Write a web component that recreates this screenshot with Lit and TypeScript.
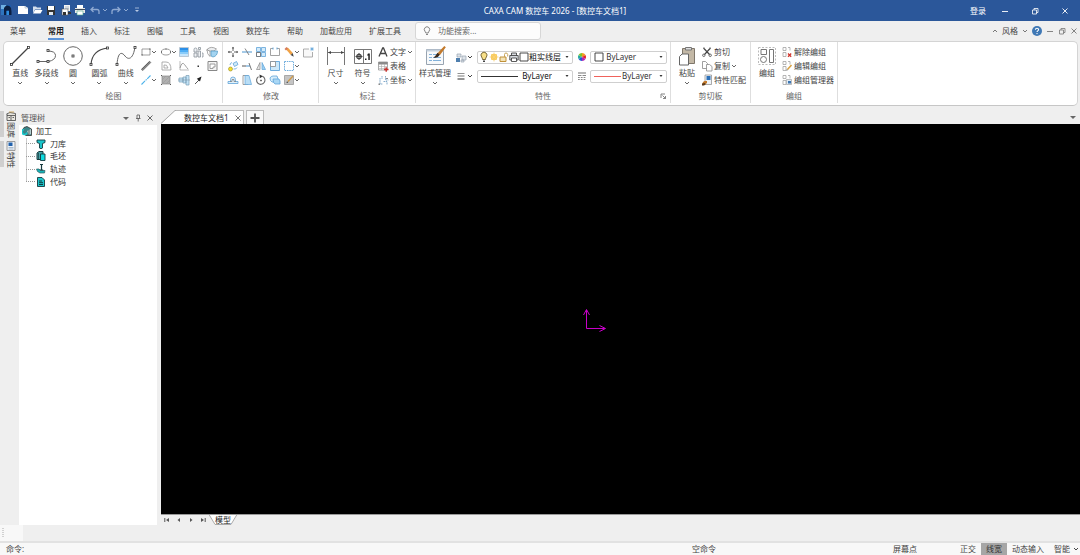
import { LitElement, html, css, svg, nothing, TemplateResult, SVGTemplateResult } from "lit";
import { customElement, property, state } from "lit/decorators.js";
import { classMap } from "lit/directives/class-map.js";

const G = "#777";
const B = "#5fa3d8";

type Glyph = { w: number; h: number; art: SVGTemplateResult };
const g = (w: number, h: number, art: SVGTemplateResult): Glyph => ({ w, h, art });
const node = (x: number, y: number) =>
  svg`<rect x=${x - 1} y=${y - 1} width="2" height="2" fill="#fff" stroke="#333" stroke-width=".8"/>`;

const ICONS: Record<string, Glyph> = {
  // window chrome
  logo: g(12, 12, svg`<path d="M1 1h10v10H1z" fill="#1d5aa8"/><path d="M1 1h5v4H1z" fill="#6fb0e4"/><path d="M1 5h4v6H1z" fill="#2f74bd"/><path d="M4 4q1-2.500 3.500-2.500T11 4l.5 3.500V11H9V6.500H6.500V11H4z" fill="#0b1f42"/><path d="M6.500 7H9v4H6.500z" fill="#2f8fe0"/>`),
  newFile: g(12, 12, svg`<path d="M1 2h7l3 2v6H1z" fill="#fff"/><path d="M8 2v2h3" fill="none" stroke="#9ab" stroke-width=".6"/>`),
  open: g(12, 12, svg`<path d="M2 2.500h3l1 1h4v2H4L2 9z" fill="#d5dfed"/><path d="M2 9.500l2-3.500h7.500L9.500 9.500z" fill="#fff"/>`),
  save: g(12, 12, svg`<path d="M2 2h8v9H2z" fill="#333"/><path d="M3 2h6v4H3z" fill="#fff"/><path d="M4 8h4v3H4z" fill="#dfe6ee"/>`),
  saveAs: g(12, 12, svg`<path d="M4 1h6v6H4z" fill="#f5f5f5"/><path d="M2 5h6v6H2z" fill="#fff" stroke="#555" stroke-width=".6"/><path d="M3 8h3v3H3zM8 8h3v2H8z" fill="#333"/><path d="M5 3h4M5 4.500h4" stroke="#89a" stroke-width=".6"/>`),
  print: g(12, 12, svg`<path d="M3 1h6v3H3z" fill="#fff"/><path d="M1 4h10v5H1z" fill="#e8e8e8"/><path d="M1 5h10v1H1z" fill="#3c4a5c"/><path d="M3 7h6v4H3z" fill="#fff" stroke="#4aa88a" stroke-width=".6"/>`),
  undo: g(12, 12, svg`<path d="M4.500 3L2 5.500 4.500 8M2 5.500h6q2 0 2 2V10" fill="none" stroke="#8ea9d2" stroke-width="1.300"/>`),
  redo: g(12, 12, svg`<path d="M7.500 3L10 5.500 7.500 8M10 5.500H4q-2 0-2 2V10" fill="none" stroke="#8ea9d2" stroke-width="1.300"/>`),
  qat: g(6, 6, svg`<path d="M1 1h4" stroke="#b9c9e3" stroke-width=".8"/><path d="M1 3h4L3 5z" fill="#b9c9e3"/>`),
  min: g(8, 8, svg`<path d="M1 4.500h6" stroke="currentColor" stroke-width=".9"/>`),
  restore: g(8, 8, svg`<path d="M1.500 3h4v4h-4zM3 3V1.500h4v4H5.500" fill="none" stroke="currentColor" stroke-width=".8"/>`),
  close: g(8, 8, svg`<path d="M1.500 1.500l5 5M6.500 1.500l-5 5" stroke="currentColor" stroke-width=".9"/>`),
  caret: g(6, 6, svg`<path d="M1 2l2 2 2-2" fill="none" stroke="currentColor"/>`),
  caretUp: g(6, 6, svg`<path d="M1 4l2-2 2 2" fill="none" stroke="currentColor"/>`),
  solid: g(6, 6, svg`<path d="M0 2h6L3 5z" fill="currentColor"/>`),
  tiny: g(6, 6, svg`<path d="M1.500 2h3L3 4z" fill="currentColor"/>`),
  help: g(10, 10, svg`<circle cx="5" cy="5" r="5" fill="#3f78b5"/><path d="M3.400 3.800Q3.500 2.200 5 2.200T6.600 3.600Q6.600 4.300 5.700 4.900 5 5.300 5 6.100" fill="none" stroke="#fff" stroke-width="1.100"/><circle cx="5" cy="7.600" r=".7" fill="#fff"/>`),
  bulbOff: g(10, 10, svg`<path d="M3.800 7Q3.700 6 2.900 5.200a2.700 2.700 0 1 1 4.200 0Q6.300 6 6.200 7zM4 8.500h2" fill="none" stroke="#666" stroke-width=".8"/>`),
  // draw, large
  line: g(22, 22, svg`<path d="M2.500 19.500L19.500 2.500" stroke="#444" stroke-width="1.200"/>${node(2.5, 19.5)}${node(19.500, 2.500)}`),
  pline: g(22, 22, svg`<path d="M1.500 16.500h11q7-1.500 7-6t-8-4.500" fill="none" stroke="#666" stroke-width="1"/>${node(2, 16.500)}${node(12, 16.500)}${node(12, 5.500)}`),
  circle: g(22, 22, svg`<circle cx="11" cy="11" r="9.300" fill="none" stroke="#666"/>${node(11, 11)}`),
  arc: g(22, 22, svg`<path d="M3 19.500Q4 5 19.500 3" fill="none" stroke="#444" stroke-width="1.100"/>${node(3, 19.500)}${node(19.500, 3)}`),
  curve: g(22, 22, svg`<path d="M2 19.500C3 6 7 7 10 11s8 4 10-9" fill="none" stroke="#666"/>${node(2, 19.500)}${node(20, 2.500)}`),
  // draw, small
  rect: g(12, 12, svg`<path d="M2 3h8v6H2z" fill="none" stroke=${G} stroke-width=".7"/><path d="M1.500 8.500h1v1h-1zM9.500 2.500h1v1h-1z" fill="#333"/>`),
  ellipse: g(12, 12, svg`<ellipse cx="6" cy="6" rx="4.600" ry="3" fill="none" stroke="#888" stroke-width=".8"/><path d="M1 5.500h1v1H1zM10 5.500h1v1h-1zM5.500 2.500h1v1h-1z" fill="#444"/>`),
  gradient: g(12, 12, svg`<path d="M2 2h8v2H2z" fill="#2a8fe8"/><path d="M2 4h8v2H2z" fill="#4faef5"/><path d="M2 6h8v2H2z" fill="#8accf9"/><path d="M2 8h8v2H2z" fill="#c6e6fc"/><path d="M1.500 1.500h9v9h-9z" fill="none" stroke="#8aa2b8" stroke-width=".6"/>`),
  block: g(12, 12, svg`<path d="M2 3.500a1.500 1.500 0 1 1 3 0V6H2zM2 7h3v4H2zM6 5h2.500v6H6zM6.500 1.500h2v2h-2zM10 7h1v4h-1" fill="#eef1f4" stroke="#8a929b" stroke-width=".8"/>`),
  box3d: g(12, 12, svg`<path d="M1 3.500Q5-.5 10.500 3L8 5H1z" fill="#eceef0" stroke="#888" stroke-width=".7"/><path d="M1 3.500l3 2v5q-3-2-3-7z" fill="#fff" stroke="#888" stroke-width=".7"/><path d="M5 5h6.500q0 5-4.500 6L5 10z" fill="#a4d4f1" stroke="#4d97c0" stroke-width=".7"/>`),
  dline: g(12, 12, svg`<path d="M1.700 10l8.600-8.500" stroke="#888" stroke-width="2"/><path d="M1.500 9.500l8-8M2.500 10.800l8.500-8.500" stroke="#555" stroke-width=".7"/>`),
  offset: g(12, 12, svg`<path d="M2 2h4q5 0 5 8H2z" fill="none" stroke="#999" stroke-width=".8"/><path d="M4 8V5q3-1 4 3z" fill="none" stroke="#999" stroke-width=".8"/>`),
  chamfer: g(12, 12, svg`<path d="M2 1v9h9" fill="none" stroke="#aaa" stroke-width=".8"/><path d="M2 8q2-7 4.500-3.500T10 9" fill="none" stroke="#888" stroke-width=".8"/>`),
  point: g(12, 12, svg`<rect x="5.500" y="5.500" width="1.500" height="1.500" fill="#333"/>`),
  region: g(12, 12, svg`<path d="M2 1.500h9v9H2z" fill="#f4f4f4" stroke="#888"/><path d="M4 4h5v3H7v1.500H4z" fill="#fff" stroke="#888" stroke-width=".8"/>`),
  blueLine: g(12, 12, svg`<path d="M1.500 10.500l9-9" stroke="#4db2ea" stroke-width="1.100" stroke-dasharray="5 .8 1.500 .8"/>`),
  hatch: g(12, 12, svg`<path d="M2 2h8v8H2z" fill="#b0b0b0" stroke="#888" stroke-width=".7"/><path d="M2 6l4-4M2 10l8-8M6 10l4-4" stroke="#999" stroke-width=".6"/><path d="M1 1h1v1H1zM10 10h1v1h-1zM1 10h1v1H1zM10 1h1v1h-1z" fill="#555"/>`),
  shaft: g(12, 12, svg`<path d="M1 4h4v4H1zM5 3h3v6H5zM8 1.500h3v9.500H8z" fill="#c3e3f7" stroke="#7a9db5" stroke-width=".7"/><path d="M0 6h12" stroke="#7f99aa" stroke-width=".6"/>`),
  arrow: g(12, 12, svg`<path d="M3 10l4-4" stroke="#555"/><path d="M9.500 2.500L8 7.500 4.800 4.800z" fill="#222"/>`),
  // modify
  move: g(12, 12, svg`<path d="M6 1v4M6 7v4M1 6h4M7 6h4" stroke="#555" stroke-width=".9"/><path d="M6 .8L4.800 2.500h2.400zM6 11.200L4.800 9.500h2.400zM.8 6l1.700-1.200v2.400zM11.200 6L9.500 4.800v2.400z" fill="#555"/>`),
  trim: g(12, 12, svg`<path d="M1 6h10" stroke="#4a95d0" stroke-width="1"/><path d="M4 2.500l4 6.500" stroke="#777" stroke-width=".9"/>`),
  array: g(12, 12, svg`<path d="M1.500 1.500h4v4h-4zM6.500 1.500h4v4h-4zM1.500 6.500h4v4h-4zM6.500 6.500h4v4h-4z" fill="#d3ebfa" stroke=${B} stroke-width=".8"/><path d="M1.500 6.500h4v4h-4z" fill="#fff" stroke="#666" stroke-width=".8"/>`),
  brk: g(12, 12, svg`<path d="M4 2.500H1.500v7h9v-7H8" fill="none" stroke="#999" stroke-width=".9"/><path d="M4 1.500v2M8 1.500v2" stroke=${B}/>`),
  pencil: g(12, 12, svg`<path d="M3 3.200l1.800-1.700 5 5.500-2 2z" fill="#f0a245"/><path d="M1.500 3l2-2 1.500 1.500-2 2z" fill="#d57b5c"/><path d="M7.700 9l2-2 1 3.700z" fill="#444"/>`),
  rectNew: g(12, 12, svg`<path d="M7 3H1.500v8h9V6" fill="#f9f9f9" stroke="#999" stroke-width=".8"/><path d="M8 3h4M10 1v4M8.700 1.700l2.600 2.600M11.300 1.700L8.700 4.300" stroke=${B} stroke-width=".7"/>`),
  copyRot: g(12, 12, svg`<circle cx="3.500" cy="9" r="2" fill="#f4e02c" stroke="#998a20" stroke-width=".6"/><path d="M6 3.500l3.500-2 1.500 3-3.500 2z" fill="#cfe9f9" stroke=${B} stroke-width=".8"/><path d="M3 5Q3 3 5 2.500M6.500 9q3 .5 3.500-1.500" fill="none" stroke=${B} stroke-width=".8"/>`),
  extend: g(12, 12, svg`<path d="M1 6h4" stroke="#555"/><path d="M5 6h4" stroke="#4a95d0"/><path d="M8 3l2.500 7" stroke="#666" stroke-width=".9"/>`),
  mirror: g(12, 12, svg`<path d="M5 2.500v7H1.500z" fill="#e5e5e5" stroke="#888" stroke-width=".7"/><path d="M7 2.500v7h3.500z" fill="#9bd0f3" stroke=${B} stroke-width=".7"/>`),
  scale: g(12, 12, svg`<path d="M1.500 1.500h9v9h-9z" fill="#cbe8fa" stroke=${B} stroke-width=".9"/><path d="M1.500 1.500h5v5h-5z" fill="#fff" stroke="#888" stroke-width=".8"/>`),
  dashBox: g(12, 12, svg`<path d="M1.500 1.500h9v9h-9z" fill="none" stroke=${B} stroke-width=".9" stroke-dasharray="1.500 .8"/>`),
  equid: g(12, 12, svg`<path d="M1 9.500h10V7.500H8.500V5.500a2.500 2.500 0 0 0-5 0v2H1z" fill="#dff0fa" stroke=${B} stroke-width=".8"/><path d="M3 7.500h2v-2h2v2h2" fill="none" stroke="#777" stroke-width=".7"/>`),
  stretch: g(12, 12, svg`<path d="M2 1.500h5v9H2z" fill="#fff" stroke="#888" stroke-width=".8"/><path d="M4 1.500h4l2.500 9H4z" fill="#b9def6" stroke=${B} stroke-width=".7"/>`),
  rotate: g(12, 12, svg`<path d="M7.500 2.300A4.200 4.200 0 1 1 3.500 2.600" fill="none" stroke="#666" stroke-width="1.100"/><path d="M4.500.5L8 2.300 4.800 4.300z" fill="#333"/><rect x="5.300" y="5.800" width="1.400" height="1.400" fill="#333"/>`),
  overlap: g(12, 12, svg`<path d="M1 4q1-2 3-2h4l1 3v3H3Q1 7 1 4z" fill="#d5ecfa" stroke=${B} stroke-width=".8"/><path d="M4 5h6l1 2v3H6Q4 9 4 5z" fill="#a9d7f5" stroke=${B} stroke-width=".8"/>`),
  fill: g(12, 12, svg`<path d="M1.500 1.500h9v9h-9z" fill="#c4c4c4" stroke="#999" stroke-width=".8"/><path d="M5 7.500l5-5.500" stroke="#d09a48" stroke-width="1.300"/><path d="M3.500 9l1.800-.4-1.300-1.300z" fill="#333"/>`),
  // annotate
  dim: g(22, 22, svg`<path d="M2.500 2v18M19.500 2v18M3 7.500h16" stroke="#666" fill="none" stroke-width=".9"/><path d="M3 7.500l3-1.500v3zM19 7.500l-3-1.500v3z" fill="#444"/>`),
  symbol: g(22, 22, svg`<path d="M2.500 4.500h17v14h-17zM11.500 4.500v14" fill="none" stroke="#777"/><circle cx="7" cy="11.500" r="2.200" fill="none" stroke="#444" stroke-width="1.200"/><path d="M7 8v7M3.500 11.500h7" stroke="#444"/><path d="M13 13.500h1.500V15H13zM16 8.500h1.800V15h-1.500v-4.500H15z" fill="#222"/>`),
  textA: g(12, 12, svg`<path d="M2 10.500L5.700 2h.8L10 10.500M3.400 7.500h5.200" fill="none" stroke="#444" stroke-width="1.300"/>`),
  table: g(12, 12, svg`<path d="M1.500 2h9v8h-9z" fill="#fff" stroke="#888" stroke-width=".7"/><path d="M1.500 2h9v2.500h-9z" fill="#8a8a8a"/><path d="M1.500 6.500h9M1.500 8.500h9M4.500 4v6M7.500 4v6" stroke="#aaa" stroke-width=".6"/><path d="M7 9.500h4.500M9.200 7.200v4.600" stroke="#c9302c" stroke-width="1.400"/>`),
  coord: g(12, 12, svg`<path d="M3 4v6h3M8.500 2v4h3M6.500 7.500H10V11M5 2v3" fill="none" stroke="#77a3c6" stroke-width=".9" stroke-dasharray="1.600 .6"/><path d="M1.500 9.500h1.500v1.500H1.500zM9 4h2v1H9z" fill="#888"/>`),
  // properties
  style: g(22, 22, svg`<path d="M2.500 4.500h17v15h-17z" fill="#f7f9fb" stroke="#98a4b1"/><path d="M2.500 4.500h17v2h-17z" fill="#c5d1dd"/><path d="M5 9.500h3M5 12.500h3M5 15.500h3M9 12.500h8M9 15.500h8M9 9.500h4" stroke="#82b1da"/><path d="M20.300 1l1.500 1.200-6 8-2.300-2z" fill="#c37a2b"/><path d="M13.500 7.800l2.300 2Q14 13.500 9.500 12.500q2.200-1.500 4-4.700z" fill="#3c2a1c"/>`),
  layers: g(12, 12, svg`<path d="M1 7h4v4H1z" fill="#4f7fae"/><path d="M2 3h4v3H2zM7 5h4v4H7zM6 9h3v2H6z" fill="#dde3e9" stroke="#9aa5b1" stroke-width=".7"/>`),
  weight: g(12, 12, svg`<path d="M2.500 3.500h7" stroke="#777" stroke-width=".8"/><path d="M2.500 6h7" stroke="#777"/><path d="M2.500 9h7" stroke="#666" stroke-width="1.400"/>`),
  linetype: g(12, 12, svg`<path d="M2 3h8" stroke="#888" stroke-width="1.200"/><path d="M2 5.500h8" stroke="#888" stroke-dasharray="3.500 1"/><path d="M2 7.500h8M2 9.500h8" stroke="#888" stroke-dasharray="1.800 1"/>`),
  wheel: g(10, 10, svg`<path d="M5 5V1a4 4 0 0 1 3.500 2z" fill="#f39b1d"/><path d="M5 5l3.500-2a4 4 0 0 1 0 4z" fill="#e3262a"/><path d="M5 5l3.500 2A4 4 0 0 1 5 9z" fill="#b028b8"/><path d="M5 5v4a4 4 0 0 1-3.500-2z" fill="#2456d6"/><path d="M5 5L1.500 7a4 4 0 0 1 0-4z" fill="#25a9a0"/><path d="M5 5L1.500 3A4 4 0 0 1 5 1z" fill="#7cc42a"/>`),
  bulb: g(10, 12, svg`<path d="M3.500 8.500Q3.500 7 2.600 6a3 3 0 1 1 4.800 0Q6.500 7 6.500 8.500z" fill="#f7e08a" stroke="#5a4a20" stroke-width=".8"/><path d="M4 9.500h2v1.500H4z" fill="#444"/>`),
  sun: g(10, 12, svg`<circle cx="5" cy="6" r="3.200" fill="#fac850"/><path d="M5 1.500v9M.5 6h9M2 3l6 6M8 3L2 9" stroke="#f8d27a" stroke-width=".8"/>`),
  unlock: g(10, 12, svg`<path d="M1 6h6v4.500H1z" fill="#f3e3b8" stroke="#c09138"/><path d="M5.500 6V3.500Q5.500 2 7 2t1.700 1.500V5.500" fill="none" stroke="#c9a55a"/>`),
  printer: g(10, 12, svg`<path d="M2.500 4.500V2h5v2.500M2.500 9H.800V4.500h8.400V9H7.500" fill="#d9dde2" stroke="#333" stroke-width=".8"/><path d="M2.500 7h5v3.500h-5z" fill="#fff" stroke="#333" stroke-width=".8"/>`),
  swatch: g(10, 12, svg`<path d="M1 2h8v8H1z" fill="#fff" stroke="#333" stroke-width=".9"/>`),
  launcher: g(6, 6, svg`<path d="M1 5V1h4M2.500 2.500l3 3M5.500 3v2.500H3" fill="none" stroke="#666" stroke-width=".8"/>`),
  // clipboard
  paste: g(22, 22, svg`<path d="M6.500 3.500h12v15h-12z" fill="#c3b8a6" stroke="#7f776b"/><path d="M9.500 2.500h6v2.500h-6z" fill="#ddd" stroke="#777"/><path d="M3.500 11.500L6 9h6.500v11h-9z" fill="#fff" stroke="#666"/>`),
  cut: g(12, 12, svg`<path d="M2.500 2l6 6.500M9.500 2l-6 6.500" stroke="#444" stroke-width="1.200"/><path d="M2 2h2M8 2h2" stroke="#888" stroke-width=".7"/><circle cx="2.800" cy="9.300" r="1.200" fill="none" stroke="#555" stroke-width=".9"/><circle cx="9.200" cy="9.300" r="1.200" fill="none" stroke="#555" stroke-width=".9"/>`),
  copy: g(12, 12, svg`<path d="M1.500 1.500h3l2 2v5h-5z" fill="#fff" stroke="#888" stroke-width=".8"/><path d="M5.500 4.500h3l2.500 2v4.500H5.500z" fill="#fff" stroke="#888" stroke-width=".8"/>`),
  match: g(12, 12, svg`<path d="M4 1h6.500v9.500H4z" fill="#eef3f8" stroke="#888" stroke-width=".7"/><path d="M5.500 2H9.500v4H5.500z" fill="#2c70b8"/><path d="M3.500 7h2.500v2L3.500 11H1l1-3z" fill="#c37a2b"/><path d="M1 9.500l3-.5.500 1.500L3 11.500H1z" fill="#5a3a1c"/>`),
  // groups
  group: g(22, 22, svg`<path d="M2.500 2.500h17v17h-17z" fill="none" stroke="#bbb" stroke-dasharray="2 1.500"/><path d="M5 4.500h5.500v5H5zM13.500 4.500h4v13h-4z" fill="#fff" stroke="#777"/><circle cx="7.500" cy="14.500" r="3" fill="#fff" stroke="#777"/>`),
  ungroup: g(12, 12, svg`<path d="M2 1.500h3v3H2zM2 6.500h3v4H2zM7 1.500h2v3" fill="none" stroke="#999" stroke-width=".7"/><path d="M7 7.500l3.200 3.200M10.200 7.500L7 10.700" stroke="#d0342c" stroke-width="1.300"/>`),
  editGroup: g(12, 12, svg`<path d="M2 1.500h3v3H2zM2 6.500h3v4H2zM7 1.500h2v3" fill="none" stroke="#999" stroke-width=".7"/><path d="M6.500 9.500L10.500 5" stroke="#d9a03f" stroke-width="1.500"/><path d="M5.500 10.800l.3-1.500 1 .8z" fill="#333"/>`),
  manageGroup: g(12, 12, svg`<path d="M2 1.500h3v3H2zM2 6.500h3v4H2zM7 1.500h2v3" fill="none" stroke="#999" stroke-width=".7"/><path d="M5.500 5.500h5v5h-5z" fill="#dfeaf5" stroke="#999" stroke-width=".6"/><path d="M7 7h3v2.500H7z" fill="#3d77b3"/>`),
  // side tabs and tree
  library: g(10, 10, svg`<path d="M.5 3L4 1.500l5.500 1v7H1V3" fill="#e8e6df" stroke="#444" stroke-width=".8"/><path d="M1 4.500h8M5 5v4M2.500 6.500h1.500M6.500 6.500H8" stroke="#444" stroke-width=".8"/><path d="M3 1h5" stroke="#c9a04a" stroke-width=".8"/>`),
  props: g(10, 10, svg`<path d="M1 .5h8v9H1z" fill="#eef2f6" stroke="#888" stroke-width=".8"/><path d="M2.500 1.500h4v3.500h-4z" fill="#2262ad"/><path d="M2.500 6.500h5M2.500 8h5" stroke="#8aa3bd" stroke-width=".7"/>`),
  down: g(8, 8, svg`<path d="M1 3h6L4 6z" fill="#666"/>`),
  pin: g(8, 8, svg`<path d="M3 1h2.500v3.500H3zM2 4.500h4.500M4.200 4.500V7.500" fill="none" stroke="#666" stroke-width=".9"/>`),
  machining: g(10, 10, svg`<path d="M2 1.500l3-1 4.500 2.500v6.500H4L.5 7V4z" fill="#3c8488" stroke="#333" stroke-width=".8"/><path d="M2 3.500a2.500 2.500 0 1 0 3 3" fill="none" stroke="#19c9cd" stroke-width="1.600"/><path d="M5 5l4-2v5l-2 1z" fill="#b5cfd1"/><path d="M7 4v5" stroke="#444" stroke-width=".7"/>`),
  tool: g(10, 10, svg`<path d="M1 1h8v2.500L6.500 4.500V9L5 9.800 3.500 9V4.500L1 3.500z" fill="#1cc4ca" stroke="#163a3e" stroke-width=".9"/>`),
  stock: g(10, 10, svg`<path d="M1 2l2-1.500h4V7L5.500 8.500H1z" fill="#4aa3a8" stroke="#163a3e" stroke-width="1"/><path d="M4.500 3h4.500v6.500H4.500z" fill="#0fdbe0" stroke="#163a3e" stroke-width=".9"/><path d="M2.500 2v6" stroke="#163a3e" stroke-width=".7"/>`),
  path: g(10, 10, svg`<path d="M.5 5h2.500l1.500 1.500H9L8.500 9H4L1.500 7.500z" fill="#17b4ba" stroke="#2d5c60" stroke-width=".7"/><path d="M4 .5h3M5.500.5v5.500M3.800 6h3.400" stroke="#163a3e" stroke-width="1.200"/>`),
  code: g(10, 10, svg`<path d="M1.500.5h4.500l2.500 2.500v6.500h-7z" fill="#1cc4ca" stroke="#163a3e" stroke-width=".9"/><path d="M3 4h3M3 5.700h4M3 7.500h4" stroke="#0d2e31" stroke-width=".9"/>`),
  plus: g(10, 10, svg`<path d="M5 .500v9M.500 5h9" stroke="#555" stroke-width="1.800"/>`),
  first: g(6, 6, svg`<path d="M.8 1v4" stroke="#555"/><path d="M5 1v4L2 3z" fill="#555"/>`),
  prev: g(6, 6, svg`<path d="M4 1v4L1.500 3z" fill="#555"/>`),
  next: g(6, 6, svg`<path d="M2 1v4l2.500-2z" fill="#555"/>`),
  last: g(6, 6, svg`<path d="M5.200 1v4" stroke="#555"/><path d="M1 1v4l3-2z" fill="#555"/>`),
};

const icon = (name: string): TemplateResult => {
  const i = ICONS[name];
  return html`<svg width=${i.w} height=${i.h} viewBox="0 0 ${i.w} ${i.h}" aria-hidden="true">${i.art}</svg>`;
};

const base = css`
  :host, * { box-sizing: border-box; }
  button, input, select, a {
    font: inherit; color: inherit; background: none; border: 0; margin: 0; padding: 0;
    border-radius: 0; text-decoration: none; white-space: nowrap;
  }
  button { display: inline-flex; align-items: center; justify-content: center; }
  svg { display: block; flex: none; }
`;

@customElement("title-bar")
class TitleBar extends LitElement {
  static styles = [base, css`
    :host { display: flex; align-items: center; height: 21px; background: #2b579a; color: #fff; }
    .quick { display: flex; align-items: center; width: 144px; margin-top: -2px; }
    .quick button { width: 15px; }
    .quick .logo { width: 16px; justify-content: flex-start; }
    .quick .drop { width: 7px; color: #8ea9d2; }
    .title { flex: 1; text-align: center; font: inherit; margin: 0; }
    .window { display: flex; align-items: center; }
    .window button { width: 30px; height: 21px; }
    .window .login { width: 24px; }
  `];
  render() {
    const q = (n: string, label: string, c = "") => html`<button class=${c} aria-label=${label}>${icon(n)}</button>`;
    return html`
      <div class="quick">
        ${q("logo", "应用程序", "logo")}${q("newFile", "新建")}${q("open", "打开")}${q("save", "保存")}
        ${q("saveAs", "另存为")}${q("print", "打印")}${q("undo", "撤销")}${q("caret", "撤销列表", "drop")}
        ${q("redo", "重做")}${q("caret", "重做列表", "drop")}${q("qat", "自定义")}
      </div>
      <h1 class="title">CAXA CAM 数控车 2026 - [数控车文档1]</h1>
      <div class="window">
        <button class="login">登录</button>${q("min", "最小化")}${q("restore", "还原")}${q("close", "关闭")}
      </div>`;
  }
}

@customElement("menu-tabs")
class MenuTabs extends LitElement {
  @state() active = "常用";
  static styles = [base, css`
    :host { display: flex; align-items: center; height: 20px; padding: 0 2px 0 10px; color: #444; }
    nav { display: flex; gap: 17px; }
    .tab { height: 18px; padding-top: 1px; border-bottom: 2px solid transparent; }
    .tab:first-child { margin-right: 5px; }
    .active { color: #222; font-weight: 600; border-color: #5b93d8; }
    .search {
      display: flex; align-items: center; gap: 6px; width: 126px; height: 18px; margin-left: 14px; padding-left: 6px;
      background: #fcfcfc; border: 1px solid #d6d6d6; border-radius: 3px;
    }
    .search input { flex: 1; min-width: 0; outline: 0; }
    .search input::placeholder { color: #666; opacity: 1; }
    .right { display: flex; align-items: center; margin-left: auto; gap: 4px; }
    .right svg { color: #777; }
  `];
  render() {
    const tabs = ["菜单", "常用", "插入", "标注", "图幅", "工具", "视图", "数控车", "帮助", "加载应用", "扩展工具"];
    return html`
      <nav>${tabs.map((t) => html`<button class=${classMap({ tab: true, active: t === this.active })} @click=${() => (this.active = t)}>${t}</button>`)}</nav>
      <label class="search">${icon("bulbOff")}<input type="search" aria-label="功能搜索" placeholder="功能搜索..." /></label>
      <div class="right">
        <button aria-label="折叠功能区">${icon("caretUp")}</button>
        <button>风格</button><button aria-label="风格列表">${icon("caret")}</button>
        <button aria-label="帮助">${icon("help")}</button><button aria-label="最小化">${icon("min")}</button>
        <button aria-label="还原">${icon("restore")}</button><button aria-label="关闭">${icon("close")}</button>
      </div>`;
  }
}

@customElement("ribbon-bar")
class RibbonBar extends LitElement {
  static styles = [base, css`
    :host {
      display: grid; grid-template-columns: 219px 96px 97px 255px 80px 87px 1fr; margin: 0 2px 0 3px;
      height: 65px; background: #fff; border: 1px solid #d4d4d4; border-bottom-color: #c6c6c6; border-radius: 5px; color: #444;
    }
    .group { display: grid; grid-template-rows: 49px 10px; border-right: 1px solid #dedede; margin-bottom: 2px; min-width: 0; }
    .body { display: flex; padding: 0 3px; }
    .name { display: grid; grid-template-columns: 1fr auto 1fr; color: #666; font: inherit; margin: 0; }
    .name button { justify-self: end; padding-right: 4px; }
    .bigs { display: grid; grid-auto-flow: column; grid-auto-columns: 1fr; width: 132px; flex: none; }
    .bigs.two { width: 54px; }
    .bigs.one { width: 26px; }
    .bigs.wide { width: 32px; }
    .big { flex-direction: column; justify-content: flex-start; padding-top: 3px; line-height: 10px; min-width: 0; }
    .big .lab { margin: 1px 0 2px; }
    .big svg + .lab + svg, .tools svg + svg, .tools span + svg { color: #666; }
    .tools { display: grid; grid-template-rows: repeat(3, 14px); align-content: start; padding-top: 3px; justify-items: start; padding-left: 1px; }
    .draw { grid-template-columns: 20px 18px 14px 14px 14px; }
    .modify { grid-template-columns: repeat(4, 14px) 19px 14px; }
    .list { grid-template-columns: auto; padding-left: 1px; }
    .list button { gap: 1px; }
    .tools svg + svg { margin-left: -1px; }
    .props { display: grid; grid-template-columns: 22px 96px 17px 77px; align-content: center; row-gap: 6px; padding: 0 0 0 4px; align-items: center; }
    .props > button { justify-content: flex-start; gap: 0; }
    .props > .mid { justify-content: center; }
    .combo {
      display: flex; align-items: center; height: 13px; border: 1px solid #cfcfcf; border-radius: 2px; padding: 0 2px 0 1px; color: #333;
    }
    .combo select { appearance: none; flex: 1; min-width: 0; height: 11px; outline: 0; }
    .combo .end { text-align-last: right; padding-right: 4px; }
    .stroke { flex: none; width: 37px; height: 1px; margin-left: 2px; background: #333; }
    .red { width: 27px; background: #f0625c; }
    .dark { color: #111; }
  `];
  big(n: string, label: string, drop = true) {
    return html`<button class="big">${icon(n)}<span class="lab">${label}</span>${drop ? icon("caret") : nothing}</button>`;
  }
  small(n: string, label: string, drop = false) {
    return html`<button aria-label=${label} title=${label}>${icon(n)}${drop ? icon("caret") : nothing}</button>`;
  }
  row(n: string, label: string, drop = false) {
    return html`<button>${icon(n)}<span>${label}</span>${drop ? icon("caret") : nothing}</button>`;
  }
  group(name: string, body: TemplateResult, launcher = false) {
    return html`<section class="group"><div class="body">${body}</div>
      <h2 class="name"><span></span>${name}${launcher ? html`<button aria-label="特性面板">${icon("launcher")}</button>` : nothing}</h2></section>`;
  }
  render() {
    return html`
      ${this.group("绘图", html`
        <div class="bigs">${this.big("line", "直线")}${this.big("pline", "多段线")}${this.big("circle", "圆")}${this.big("arc", "圆弧")}${this.big("curve", "曲线")}</div>
        <div class="tools draw">
          ${this.small("rect", "矩形", true)}${this.small("ellipse", "椭圆", true)}${this.small("gradient", "渐变填充")}${this.small("block", "块")}${this.small("box3d", "三视图")}
          ${this.small("dline", "平行线")}${this.small("offset", "等距线")}${this.small("chamfer", "公式曲线")}${this.small("point", "点")}${this.small("region", "局部放大")}
          ${this.small("blueLine", "中心线", true)}${this.small("hatch", "剖面线")}${this.small("shaft", "孔轴")}${this.small("arrow", "箭头")}
        </div>`)}
      ${this.group("修改", html`
        <div class="tools modify">
          ${this.small("move", "平移")}${this.small("trim", "裁剪")}${this.small("array", "阵列")}${this.small("brk", "打断")}${this.small("pencil", "删除", true)}${this.small("rectNew", "分解")}
          ${this.small("copyRot", "平移复制")}${this.small("extend", "延伸")}${this.small("mirror", "镜像")}${this.small("scale", "缩放")}${this.small("dashBox", "过渡", true)}<span></span>
          ${this.small("equid", "等距")}${this.small("stretch", "拉伸")}${this.small("rotate", "旋转")}${this.small("overlap", "叠放")}${this.small("fill", "填充", true)}
        </div>`)}
      ${this.group("标注", html`
        <div class="bigs two">${this.big("dim", "尺寸")}${this.big("symbol", "符号")}</div>
        <div class="tools list">${this.row("textA", "文字", true)}${this.row("table", "表格")}${this.row("coord", "坐标", true)}</div>`)}
      ${this.group("特性", html`
        <div class="bigs wide">${this.big("style", "样式管理")}</div>
        <div class="props">
          ${this.small("layers", "图层", true)}
          <div class="combo">${["bulb", "sun", "unlock", "printer", "swatch"].map(icon)}<select class="dark" aria-label="图层"><option>粗实线层</option></select>${icon("tiny")}</div>
          <button class="mid" aria-label="颜色">${icon("wheel")}</button>
          <div class="combo">&nbsp;${icon("swatch")}&nbsp;<select aria-label="颜色"><option>ByLayer</option></select>${icon("tiny")}</div>
          ${this.small("weight", "线宽", true)}
          <div class="combo"><i class="stroke"></i><select class="end dark" aria-label="线型"><option>ByLayer</option></select>&emsp;${icon("tiny")}</div>
          <button class="mid" aria-label="线型">${icon("linetype")}</button>
          <div class="combo"><i class="stroke red"></i><select class="end" aria-label="线宽"><option>ByLayer</option></select>&nbsp;${icon("tiny")}</div>
        </div>`, true)}
      ${this.group("剪切板", html`
        <div class="bigs one">${this.big("paste", "粘贴")}</div>
        <div class="tools list">${this.row("cut", "剪切")}${this.row("copy", "复制", true)}${this.row("match", "特性匹配")}</div>`)}
      ${this.group("编组", html`
        <div class="bigs one">${this.big("group", "编组", false)}</div>
        <div class="tools list">${this.row("ungroup", "解除编组")}${this.row("editGroup", "编辑编组")}${this.row("manageGroup", "编组管理器")}</div>`)}`;
  }
}

@customElement("tree-panel")
class TreePanel extends LitElement {
  static styles = [base, css`
    :host { display: grid; grid-template-columns: 19px 138px; color: #333; }
    .side { display: flex; flex-direction: column; gap: 4px; padding-top: 1px; }
    .side button {
      flex-direction: column; justify-content: flex-start; width: 17px; height: 26px; gap: 1px;
      border-left: 4px solid #cfcfcf;
    }
    .side span { writing-mode: vertical-rl; text-orientation: sideways; line-height: 10px; }
    .panel { display: grid; grid-template-rows: 15px 1fr; }
    header { display: flex; align-items: center; gap: 4px; padding: 0 3px 0 2px; color: #555; }
    header span { flex: 1; }
    .tree { background: #fff; padding: 0 3px; }
    ul { list-style: none; margin: 0; padding: 0; display: grid; grid-auto-rows: 1fr; height: 63px; }
    li { display: flex; align-items: center; }
    li button { gap: 4px; }
    .child::before { content: ""; width: 9px; margin: 0 1px 0 4px; border-top: 1px dotted #999; }
    .child { background: linear-gradient(#ccc, #ccc) 4px 0 / 1px 100% no-repeat; }
    .child:last-child { background-size: 1px 50%; }
  `];
  render() {
    const items = [["tool", "刀库"], ["stock", "毛坯"], ["path", "轨迹"], ["code", "代码"]];
    return html`
      <div class="side"><button>${icon("library")}<span>图库</span></button><button>${icon("props")}<span>特性</span></button></div>
      <section class="panel">
        <header><span>管理树</span><button aria-label="菜单">${icon("down")}</button><button aria-label="固定">${icon("pin")}</button><button aria-label="关闭">${icon("close")}</button></header>
        <div class="tree"><ul>
          <li><button>${icon("machining")}加工</button></li>
          ${items.map(([n, t]) => html`<li class="child"><button>${icon(n)}${t}</button></li>`)}
        </ul></div>
      </section>`;
  }
}

@customElement("drawing-area")
class DrawingArea extends LitElement {
  static styles = [base, css`
    :host { display: grid; grid-template-rows: 14px 1fr 10px; min-width: 0; color: #333; }
    .tabs { display: flex; align-items: stretch; }
    .doc { display: flex; align-items: center; background: #fff; border: solid #bbb; border-width: 1px 1px 0 0; padding: 0 1px 0 8px; gap: 5px; color: #222; }
    .doc svg { color: #666; }
    .add { width: 18px; margin-left: 2px; border: 1px solid #bbb; border-bottom: 0; background: #fafafa; }
    .more { margin-left: auto; padding-right: 4px; color: #666; }
    .canvas { position: relative; background: #000; overflow: hidden; border-bottom: 1px solid #999; }
    .axes { position: absolute; left: 420px; top: 183px; }
    .sheets { display: flex; align-items: center; }
    .sheets > button { width: 12px; height: 10px; }
    .sheets > .sheet { display: flex; width: auto; margin-left: 0; }
    .sheet span { background: #fff; line-height: 9px; height: 10px; border-bottom: 1px solid #aaa; color: #222; }
  `];
  render() {
    return html`
      <div class="tabs">
        <svg width="15" height="14" viewBox="0 0 15 14" aria-hidden="true"><path d="M0 14L15 0v14z" fill="#fff"/><path d="M0 13.500L14 .5h1" fill="none" stroke="#aaa"/></svg>
        <div class="doc"><button>数控车文档1</button><button aria-label="关闭文档">${icon("close")}</button></div>
        <button class="add" aria-label="新建文档">${icon("plus")}</button>
        <button class="more" aria-label="文档列表">${icon("solid")}</button>
      </div>
      <div class="canvas">
        <svg class="axes" width="28" height="28" viewBox="0 0 28 28" role="img" aria-label="坐标系"><path d="M5.500 3v18.500H24M2.500 8l3-5.500 3 5.500M18.500 18.500l6 3-6 3" fill="none" stroke="#c800c8" stroke-width="1"/></svg>
      </div>
      <div class="sheets">
        <button aria-label="第一页">${icon("first")}</button><button aria-label="上一页">${icon("prev")}</button>
        <button aria-label="下一页">${icon("next")}</button><button aria-label="最后一页">${icon("last")}</button>
        <button class="sheet"><svg width="6" height="10" viewBox="0 0 6 10" aria-hidden="true"><path d="M0 0h6v10z" fill="#fff"/><path d="M.3 0L6 9.500" stroke="#aaa"/></svg><span>模型</span><svg width="6" height="10" viewBox="0 0 6 10" aria-hidden="true"><path d="M0 0h6L0 10z" fill="#fff"/><path d="M5.700 0L0 9.500" stroke="#aaa"/></svg></button>
      </div>`;
  }
}

@customElement("status-bar")
class StatusBar extends LitElement {
  @property({ type: Boolean }) weight = true;
  static styles = [base, css`
    :host { display: block; color: #444; }
    .dock { height: 16px; }
    .grip { display: flex; align-items: center; width: 23px; height: 16px; padding-left: 2px; background: #f8f8f8; }
    .bar { display: flex; align-items: center; height: 14px; border-top: 2px solid #e2e2e2; background: #f8f8f8; padding-left: 6px; }
    .cmd { flex: 1; display: flex; gap: 2px; min-width: 0; }
    .cmd input { flex: 1; min-width: 0; outline: 0; }
    .prompt { width: 201px; }
    .snap { width: 62px; }
    .bar button { height: 12px; padding: 0 5px; }
    .on { background: #a6a6a6; color: #333; }
    .bar .smart { padding: 0 1px 0 5px; gap: 3px; }
  `];
  render() {
    return html`
      <div class="dock"><div class="grip"><svg width="2" height="10" viewBox="0 0 2 10" aria-hidden="true"><path d="M1 0v10" stroke="#aaa" stroke-dasharray="1 1"/></svg></div></div>
      <div class="bar">
        <label class="cmd">命令:<input type="text" /></label>
        <span class="prompt">空命令</span><span class="snap">屏幕点</span>
        <button>正交</button>
        <button class=${classMap({ on: this.weight })} @click=${() => (this.weight = !this.weight)}>线宽</button>
        <button>动态输入</button>
        <button class="smart">智能${icon("caret")}</button>
      </div>`;
  }
}

@customElement("app-root")
class AppRoot extends LitElement {
  static styles = css`
    :host {
      display: grid; grid-template-rows: auto auto auto 1fr auto; min-height: 100vh; background: #efefef;
      font: 8px/10px "Noto Sans", "Noto Sans CJK SC", sans-serif;
    }
    .work { display: grid; grid-template-columns: 157px 1fr; column-gap: 4px; padding-top: 4px; }
  `;
  render() {
    return html`<title-bar></title-bar><menu-tabs></menu-tabs><ribbon-bar></ribbon-bar>
      <div class="work"><tree-panel></tree-panel><drawing-area></drawing-area></div>
      <status-bar></status-bar>`;
  }
}
